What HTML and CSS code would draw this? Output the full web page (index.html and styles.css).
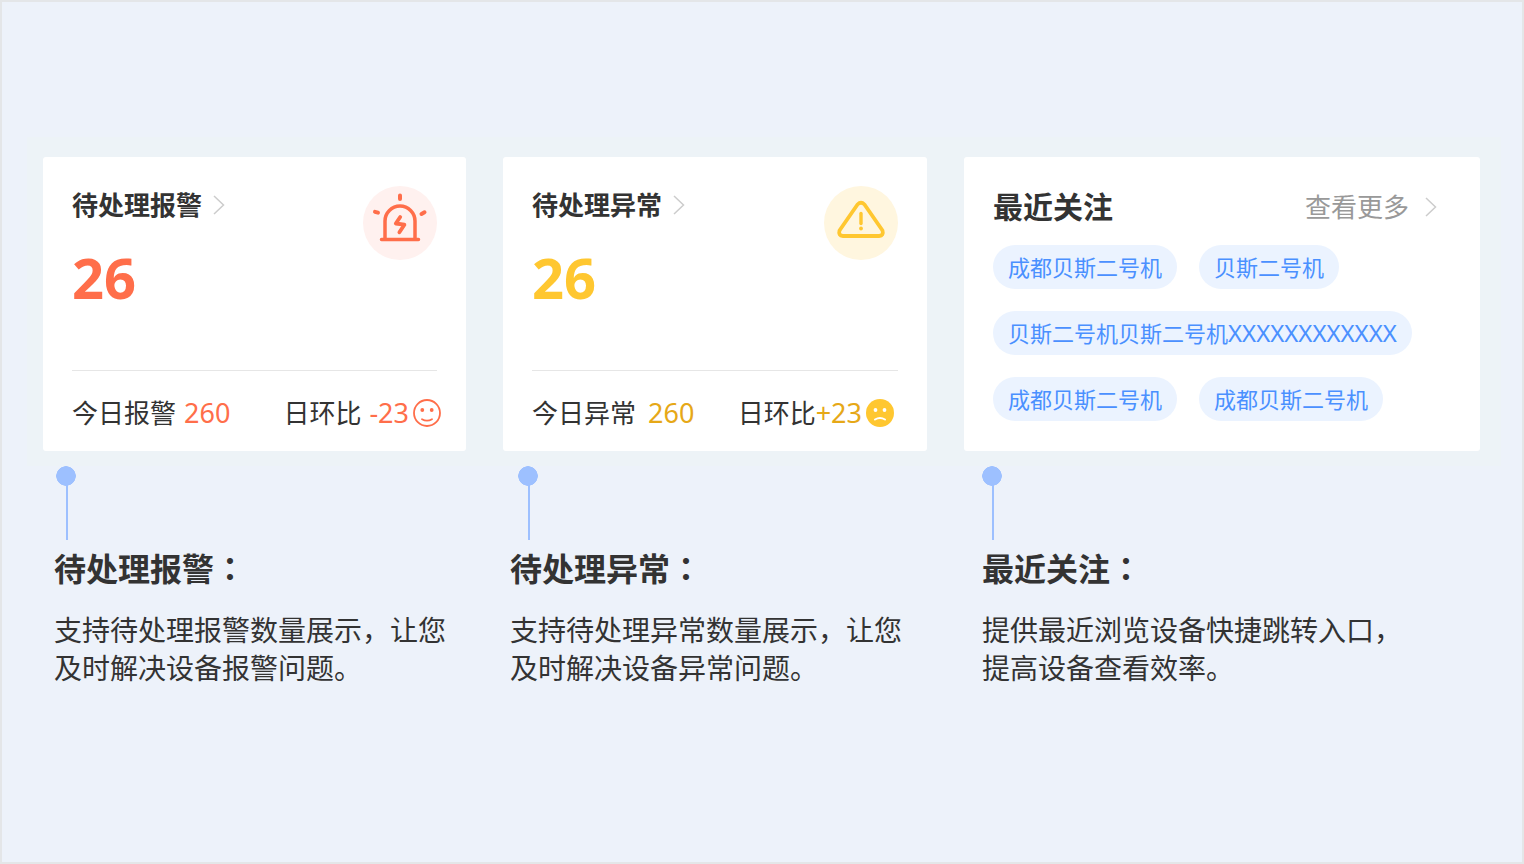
FILE: index.html
```html
<!DOCTYPE html>
<html lang="zh-CN">
<head>
  <meta charset="UTF-8">
  <meta name="viewport" content="width=device-width, initial-scale=1.0">
  <title>待处理报警</title>
  <link rel="stylesheet" href="styles.css">
</head>
<body>
  <main class="page">
    <div class="cards">
      <section class="card stat alarm">
        <div class="stat-top">
          <div>
            <h2><a href="#" class="title-link">待处理报警
              <svg class="arrow" viewBox="0 0 12 20"><path d="M1 1l9.500 9L1 19"/></svg></a></h2>
            <p class="total">26</p>
          </div>
          <svg class="badge" viewBox="0 0 74 74" fill="none" stroke="#ff6e4a" stroke-linecap="round" stroke-linejoin="round">
            <circle cx="37" cy="37" r="37" fill="#fff1ef" stroke="none"/>
            <path stroke-width="3.500" d="M22 53V35a15 15 0 0 1 30 0V53M18.500 53.500H55.500"/>
            <path stroke-width="4" d="M37 9.500V13M12 25.800l3 .9M58.500 28l3-1.700"/>
            <path stroke-width="3.800" d="M37.200 31l-4.400 6.500 8.600 1.200-5 7.600"/>
          </svg>
        </div>
        <div class="stat-bottom">
          <span class="today">今日报警 <b class="num">260</b></span>
          <span class="trend"><span class="label">日环比</span><b class="num">-23</b><svg class="face" viewBox="0 0 28 28" fill="none" stroke="#ff6e4a" stroke-width="1.800" stroke-linecap="round">
              <circle cx="14" cy="14" r="13"/>
              <circle cx="9.300" cy="11" r="1.900" fill="#ff6e4a" stroke="none"/>
              <circle cx="18.700" cy="11" r="1.900" fill="#ff6e4a" stroke="none"/>
              <path d="M9 20.300q5 2.800 10 0"/>
            </svg></span>
        </div>
      </section>

      <section class="card stat abnormal">
        <div class="stat-top">
          <div>
            <h2><a href="#" class="title-link">待处理异常
              <svg class="arrow" viewBox="0 0 12 20"><path d="M1 1l9.500 9L1 19"/></svg></a></h2>
            <p class="total">26</p>
          </div>
          <svg class="badge" viewBox="0 0 74 74" fill="none" stroke="#ffc730" stroke-linecap="round" stroke-linejoin="round">
            <circle cx="37" cy="37" r="37" fill="#fff6df" stroke="none"/>
            <path stroke-width="3.800" d="M33.500 18.500Q37 15 40.500 18.500L58.500 44.500Q60 49.500 55 50H19Q14 49.500 15.500 44.500Z"/>
            <path stroke-width="3.400" d="M37 27.500V37.500"/>
            <circle cx="37" cy="42.500" r="1.900" fill="#ffc730" stroke="none"/>
          </svg>
        </div>
        <div class="stat-bottom">
          <span class="today">今日异常 <b class="num">260</b></span>
          <span class="trend"><span class="label">日环比</span><b class="num">+23</b><svg class="face" viewBox="0 0 28 28" fill="none" stroke="#fff" stroke-width="2" stroke-linecap="round">
              <circle cx="14" cy="14" r="14" fill="#ffc730" stroke="none"/>
              <circle cx="9.500" cy="11" r="1.900" fill="#fff" stroke="none"/>
              <circle cx="18.500" cy="11" r="1.900" fill="#fff" stroke="none"/>
              <path d="M9 20.500q5-3 10 0"/>
            </svg></span>
        </div>
      </section>

      <section class="card recent">
        <div class="recent-head">
          <h2>最近关注</h2>
          <a href="#" class="more">查看更多
            <svg class="arrow" viewBox="0 0 12 20"><path d="M1 1l9.500 9L1 19"/></svg></a>
        </div>
        <div class="tags">
          <a href="#" class="tag">成都贝斯二号机</a>
          <a href="#" class="tag">贝斯二号机</a>
          <a href="#" class="tag">贝斯二号机贝斯二号机<span class="latin">XXXXXXXXXXXX</span></a>
          <a href="#" class="tag">成都贝斯二号机</a>
          <a href="#" class="tag">成都贝斯二号机</a>
        </div>
      </section>
    </div>

    <div class="pins">
      <div class="pin"></div>
      <div class="pin"></div>
      <div class="pin"></div>
    </div>
    <div class="notes">
      <article class="note">
        <h3>待处理报警<span class="colon" lang="zh-TW">：</span></h3>
        <p>支持待处理报警数量展示，让您及时解决设备报警问题。</p>
      </article>
      <article class="note">
        <h3>待处理异常<span class="colon" lang="zh-TW">：</span></h3>
        <p>支持待处理异常数量展示，让您及时解决设备异常问题。</p>
      </article>
      <article class="note">
        <h3>最近关注<span class="colon" lang="zh-TW">：</span></h3>
        <p>提供最近浏览设备快捷跳转入口，<br>提高设备查看效率。</p>
      </article>
    </div>
  </main>
</body>
</html>
```
FILE: styles.css
```css
* {
  box-sizing: border-box;
}
body {
  margin: 0;
  font-family: "Noto Sans", "Noto Sans CJK SC", sans-serif;
  color: #333;
  background: #edf2fa;
}
h2, h3, p {
  margin: 0;
}
a {
  color: inherit;
  text-decoration: none;
}
.page {
  min-height: 100vh;
  padding: 135px 21px 0 25px;
  border: 2px solid #e4e6e8;
}

/* cards */
.cards {
  display: grid;
  grid-template-columns: 423fr 424fr 516fr;
  gap: 37px;
  padding: 20px 21px 15px 16px;
  background: #edf3f7;
}
.card {
  min-height: 294px;
  padding: 29px;
  background: #fff;
  border-radius: 3px;
}
.arrow {
  width: 12px;
  height: 20px;
  fill: none;
  stroke: #ccc;
  stroke-width: 1.5;
}
.stat {
  display: flex;
  flex-direction: column;
  justify-content: space-between;
  padding-bottom: 19px;
}
.stat-top {
  display: flex;
  justify-content: space-between;
}
.title-link {
  display: flex;
  align-items: center;
  gap: 11px;
  font-size: 26px;
  line-height: 38px;
}
.total {
  font-size: 56px;
  font-weight: bold;
  line-height: 76px;
  margin-top: 15px;
}
.badge {
  width: 74px;
  height: 74px;
}
.stat-bottom {
  display: flex;
  justify-content: space-between;
  padding-top: 23px;
  border-top: 1px solid #e6e6e6;
  font-size: 26px;
  line-height: 38px;
  white-space: nowrap;
}
.num {
  font-size: 27px;
  font-weight: normal;
}
.today, .trend {
  display: flex;
  align-items: center;
}
.today {
  gap: 8px;
}
.face {
  width: 28px;
  height: 28px;
  margin-left: 4px;
}
.alarm .total, .alarm .num {
  color: #ff6e4a;
}
.alarm .trend {
  margin-right: -4px;
}
.alarm .label {
  margin-right: 8px;
}
.abnormal .total {
  color: #ffc730;
}
.abnormal .num {
  color: #e6a817;
}
.abnormal .today {
  gap: 12px;
}
.abnormal .trend {
  margin-right: 4px;
}

/* recently followed */
.recent-head {
  display: flex;
  justify-content: space-between;
  align-items: center;
  padding-right: 14px;
  line-height: 42px;
}
.recent-head h2 {
  font-size: 30px;
}
.more {
  display: flex;
  align-items: center;
  gap: 16px;
  font-size: 26px;
  color: #999;
}
.tags {
  display: flex;
  flex-wrap: wrap;
  gap: 22px;
  margin-top: 17px;
}
.tag {
  height: 44px;
  padding: 0 15px;
  border-radius: 22px;
  background: #ebf3ff;
  color: #4a90ff;
  font-size: 22px;
  line-height: 44px;
}
.latin {
  font-size: 24px;
}

/* notes under the cards */
.pins {
  display: grid;
  grid-template-columns: 462fr 464fr 519fr;
  padding-left: 29px;
}
.pin {
  width: 20px;
  height: 74px;
  background:
    radial-gradient(circle at 10px 10px, #9dc0ff 9.5px, transparent 10px),
    linear-gradient(#9dc0ff, #9dc0ff) 10px 10px / 2px 64px no-repeat;
}
.notes {
  display: grid;
  grid-template-columns: 456fr 472fr 519fr;
  padding-left: 27px;
}
.note h3 {
  margin-top: 3px;
  font-size: 32px;
  line-height: 48px;
}
.colon {
  font-family: "Noto Sans CJK TC", sans-serif;
}
.note p {
  max-width: 400px;
  margin-top: 18px;
  font-size: 28px;
  line-height: 38px;
}
.note:last-child p {
  max-width: none;
}
```
